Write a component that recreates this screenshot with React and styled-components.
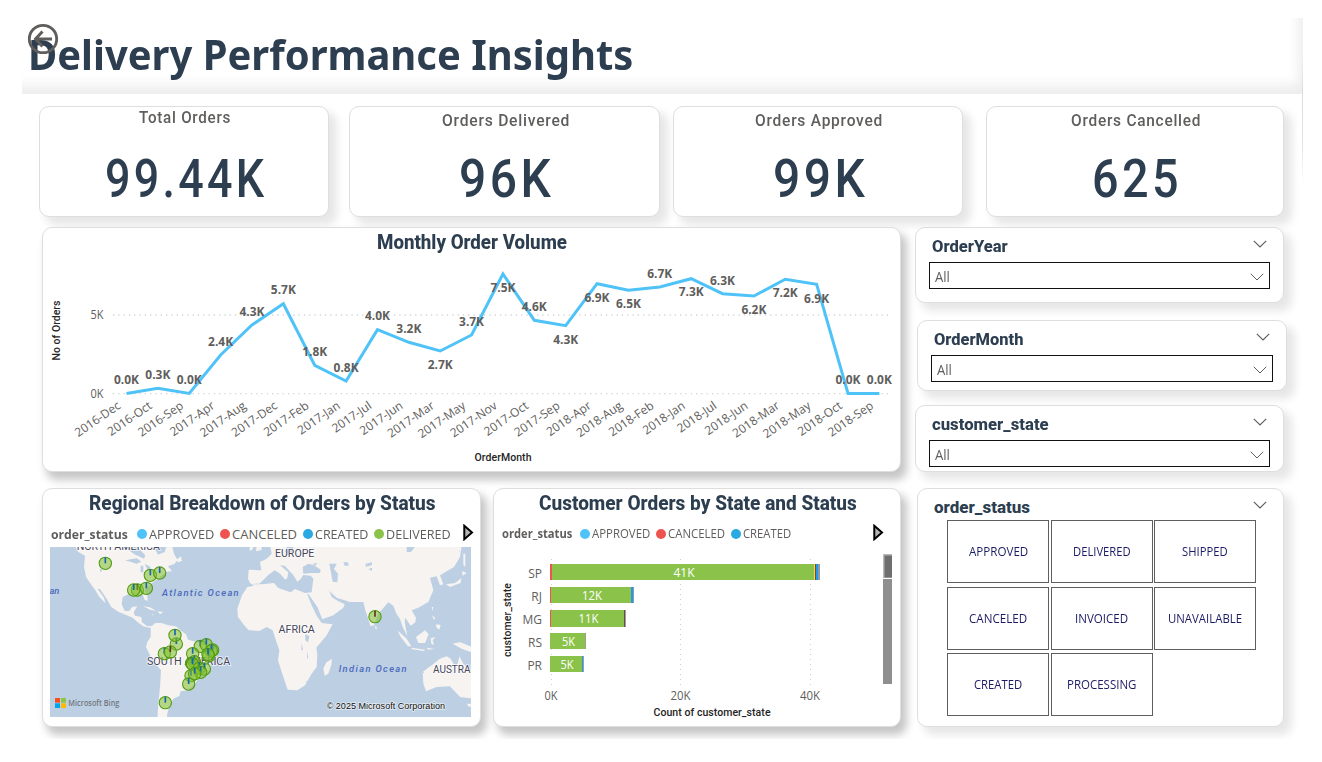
import React, { useLayoutEffect, useRef, useState } from "react";
import styled, { createGlobalStyle } from "styled-components";

const DIN = `Roboto, "Liberation Sans", sans-serif`;
const UI = `"Open Sans", "Noto Sans", sans-serif`;
const NAVY = "#2c3e50";
const GREY = "#605e5c";

const Global = createGlobalStyle`
  * { box-sizing: border-box; }
  body { margin: 0; background: #fff; font-family: ${UI}; color: ${GREY}; }
`;

const FitBox = styled.span`
  display: inline-block;
  flex: none;
  white-space: nowrap;
  text-align: left;
`;
const FitText = styled.span`
  display: inline-block;
  transform-origin: left center;
`;

/* Stretches or condenses its text horizontally to the given width. */
function Fit({ w, children }) {
  const ref = useRef(null);
  const [scale, setScale] = useState(1);
  useLayoutEffect(() => {
    setScale(w / ref.current.offsetWidth);
  }, [w, children]);
  return (
    <FitBox style={{ width: w }}>
      <FitText ref={ref} style={{ transform: `scaleX(${scale})` }}>{children}</FitText>
    </FitBox>
  );
}

const Canvas = styled.main`
  position: relative;
  width: 1281px;
  height: 721px;
  margin: 18px 0 0 22px;
  overflow: hidden;
  background: #fff;
`;
const Header = styled.header`
  display: flex;
  align-items: center;
  height: 76px;
  padding: 0 0 5px 6px;
  box-shadow: inset -8px -12px 12px -3px #eeeeee;
`;
const PageTitle = styled.h1`
  margin: 0;
  font: 700 42px/1 "Noto Sans", "Open Sans", sans-serif;
  color: ${NAVY};
`;
const BackButton = styled.svg`
  position: absolute;
  left: 5px;
  top: 5px;
`;
const EdgeLine = styled.i`
  position: absolute;
  right: 0;
  top: 36px;
  width: 1px;
  height: 130px;
  background: linear-gradient(rgba(0, 0, 0, 0), #dcdcdc 30%, #e4e4e4 70%, rgba(0, 0, 0, 0));
`;

const Card = styled.section`
  display: flex;
  flex-direction: column;
  flex: none;
  width: ${(p) => p.$w}px;
  height: ${(p) => p.$h}px;
  margin-left: ${(p) => p.$ml || 0}px;
  margin-top: ${(p) => p.$mt || 0}px;
  border: 1px solid #dedede;
  border-radius: 10px;
  background: #fff;
  box-shadow: ${(p) => (p.$dark ? "5px 7px 9px 1px #c6c6c6" : "7px 7px 9px 1px #e7e7e7")};
`;
const Kpis = styled.div`
  display: flex;
  margin: 12px 0 0 17px;
`;
const KpiCard = styled(Card)`
  align-items: center;
  padding-left: 2px;
  font-family: ${DIN};
`;
const KpiLabel = styled.div`
  margin-top: ${(p) => p.$top}px;
  height: 20px;
  font-size: 16.5px;
  font-weight: 500;
  line-height: 20px;
  letter-spacing: 0.8px;
`;
const KpiValue = styled.div`
  margin-top: ${(p) => p.$top}px;
  padding-left: 2px;
  font-size: 54.5px;
  font-weight: 500;
  line-height: 60px;
  letter-spacing: 4px;
  color: ${NAVY};
`;

const Body = styled.div`
  display: flex;
  margin: 10px 0 0 20px;
`;
const Charts = styled.div`
  width: 873px;
`;
const Row = styled.div`
  display: flex;
  margin-top: 16px;
`;
const Side = styled.aside`
  display: flex;
  flex-direction: column;
`;
const CardTitle = styled.h2`
  margin: 0;
  height: 30px;
  padding-left: 1px;
  text-align: center;
  font: 800 19.5px/29px ${DIN};
  color: ${NAVY};
`;

const SlicerHead = styled.div`
  display: flex;
  justify-content: space-between;
  align-items: flex-start;
  height: ${(p) => p.$h || 34}px;
  padding: 8px 16px 0 16px;
  font: 800 17px/20px ${DIN};
  color: ${NAVY};
`;
const HeadChevron = styled.svg`
  margin-top: 4px;
`;
const Select = styled.div`
  display: flex;
  align-items: center;
  justify-content: space-between;
  height: 27px;
  margin: 0 13px;
  padding: 2px 5px 0 5px;
  border: 1px solid #111;
  font-size: 14px;
  line-height: 20px;
  color: ${GREY};
`;
const StatusGrid = styled.div`
  display: grid;
  grid-template-columns: repeat(3, 102px);
  grid-auto-rows: 63px;
  gap: 3.5px 1.5px;
  margin-left: 29px;
`;
const StatusTile = styled.div`
  display: flex;
  align-items: center;
  justify-content: center;
  padding-top: 1px;
  border: 1px solid ${GREY};
  font-size: 12px;
  line-height: 16px;
  color: #1b1b64;
`;

const Legend = styled.div`
  display: flex;
  align-items: center;
  height: 26px;
  padding-top: 3px;
  padding-left: ${(p) => p.$pl}px;
  font-size: ${(p) => p.$fs}px;
  line-height: 20px;
`;
const LegendName = styled.b`
  display: flex;
  margin-right: ${(p) => p.$mr}px;
`;
const LegendItem = styled.span`
  display: flex;
  align-items: center;
  margin-right: 6px;
`;
const Dot = styled.i`
  width: 10px;
  height: 10px;
  margin-right: ${(p) => p.$gap}px;
  border-radius: 50%;
  background: ${(p) => p.$c};
`;
const NextArrow = styled.svg`
  margin-bottom: 2px;
  margin-left: ${(p) => p.$ml}px;
`;
const Plot = styled.svg`
  display: block;
  flex: none;
  font-family: ${UI};
`;
const MapView = styled(Plot)`
  margin: 2px 0 0 7px;
`;

function Chevron({ head }) {
  const path = <path d="M.8 .8 L7 7 L13.2 .8" fill="none" stroke={GREY} strokeWidth={head ? 1.2 : 1} />;
  return head ? (
    <HeadChevron width="14" height="8">{path}</HeadChevron>
  ) : (
    <svg width="14" height="8">{path}</svg>
  );
}

function Slicer({ title, tw, ...card }) {
  return (
    <Card {...card}>
      <SlicerHead>
        <Fit w={tw}>{title}</Fit>
        <Chevron head />
      </SlicerHead>
      <Select>
        <Fit w={15}>All</Fit>
        <Chevron />
      </Select>
    </Card>
  );
}

const KPIS = [
  { label: "Total Orders", lw: 92, value: "99.44K", vw: 162, w: 290, ml: 0, raised: true },
  { label: "Orders Delivered", lw: 128, value: "96K", vw: 95, w: 311, ml: 20 },
  { label: "Orders Approved", lw: 128, value: "99K", vw: 95, w: 290, ml: 13 },
  { label: "Orders Cancelled", lw: 130, value: "625", vw: 90, w: 298, ml: 23 },
];

/* month, line y, label text, label centre y */
const MONTHS = [
  ["2016-Dec", 393.5, "0.0K", 380], ["2016-Oct", 388.3, "0.3K", 375], ["2016-Sep", 393.5, "0.0K", 380],
  ["2017-Apr", 355, "2.4K", 342], ["2017-Aug", 325, "4.3K", 312], ["2017-Dec", 303.7, "5.7K", 290],
  ["2017-Feb", 365.3, "1.8K", 352], ["2017-Jan", 381, "0.8K", 368], ["2017-Jul", 329.7, "4.0K", 316],
  ["2017-Jun", 342.3, "3.2K", 329], ["2017-Mar", 351, "2.7K", 365], ["2017-May", 335, "3.7K", 322],
  ["2017-Nov", 274, "7.5K", 288], ["2017-Oct", 320.3, "4.6K", 307], ["2017-Sep", 325.7, "4.3K", 340],
  ["2018-Apr", 283.7, "6.9K", 298], ["2018-Aug", 290.3, "6.5K", 304], ["2018-Feb", 287, "6.7K", 274],
  ["2018-Jan", 278.7, "7.3K", 292], ["2018-Jul", 293.7, "6.3K", 281], ["2018-Jun", 296, "6.2K", 310],
  ["2018-Mar", 279.3, "7.2K", 293], ["2018-May", 284.3, "6.9K", 299], ["2018-Oct", 393.5, "0.0K", 380],
  ["2018-Sep", 393.5, "0.0K", 380],
];
const monthX = (i) => 126.5 + i * 31.37;

function LineChart() {
  return (
    <Plot width="857" height="213" viewBox="43 258 857 213">
      <g stroke="#d4d4d4" strokeWidth="1.3" strokeDasharray="1.3 4">
        <path d="M113 315 H891" />
        <path d="M113 393.7 H891" />
      </g>
      <g fontSize="12" fill={GREY} textAnchor="end">
        <text x="103.5" y="319" textLength="13" lengthAdjust="spacingAndGlyphs">5K</text>
        <text x="103.5" y="398" textLength="13" lengthAdjust="spacingAndGlyphs">0K</text>
      </g>
      <polyline
        points={MONTHS.map((m, i) => `${monthX(i)},${m[1]}`).join(" ")}
        fill="none" stroke="#4fc3f7" strokeWidth="3" strokeLinejoin="miter"
      />
      <g fontSize="11.5" fontWeight="700" fill={GREY} textAnchor="middle">
        {MONTHS.map((m, i) => (
          <text key={i} x={monthX(i)} y={m[3] + 4.4} textLength="25" lengthAdjust="spacingAndGlyphs">{m[2]}</text>
        ))}
      </g>
      <g fontSize="12" fill={GREY} textAnchor="end">
        {MONTHS.map((m, i) => (
          <text key={i} transform={`translate(${monthX(i) - 5} 407.5) rotate(-34.5)`}>{m[0]}</text>
        ))}
      </g>
      <g fontFamily={DIN} fontSize="10.5" fontWeight="500" fill="#252423" textAnchor="middle">
        <text transform="translate(60 330.5) rotate(-90)" textLength="60" lengthAdjust="spacing">No of Orders</text>
        <text x="503" y="461" textLength="57" lengthAdjust="spacing">OrderMonth</text>
      </g>
    </Plot>
  );
}

const BARS = [
  { s: "SP", y: 564, h: 16, v: "41K", tx: 684, w: 21, parts: [[550, 2, "#ef5350"], [552, 262, "#8bc34a"], [814, 1, "#fdd835"], [815, 1, "#6d4c41"], [816, 2, "#2196f3"], [818, 2, "#8f9aa3"]] },
  { s: "RJ", y: 587, h: 16, v: "12K", tx: 592, w: 20, parts: [[550, 1, "#ef5350"], [551, 80, "#8bc34a"], [631, 2, "#2196f3"], [633, 1, "#8f9aa3"]] },
  { s: "MG", y: 610, h: 17, v: "11K", tx: 588.5, w: 20, parts: [[550, 1, "#ef5350"], [551, 73, "#8bc34a"], [624, 1, "#6d4c41"], [625, 1, "#9e9e9e"]] },
  { s: "RS", y: 633, h: 16, v: "5K", tx: 568.5, w: 13, parts: [[550, 35, "#8bc34a"], [585, 1, "#9e9e9e"]] },
  { s: "PR", y: 656, h: 16, v: "5K", tx: 567, w: 13, parts: [[550, 32, "#8bc34a"], [582, 1, "#2196f3"], [583, 1, "#9e9e9e"]] },
];

function BarChart() {
  return (
    <Plot width="406" height="180" viewBox="494 545 406 180">
      <g stroke="#cfcfcf" strokeWidth="1" strokeDasharray="1 4">
        <path d="M551.5 559 V685" />
        <path d="M680.5 559 V685" />
        <path d="M810.5 559 V685" />
      </g>
      {BARS.map((b) => (
        <g key={b.s} fontSize="12">
          {b.parts.map(([x, w, c]) => (
            <rect key={x} x={x} y={b.y} width={w} height={b.h} fill={c} shapeRendering="crispEdges" />
          ))}
          <text x="542" y={b.y + 13.6} fill={GREY} textAnchor="end">{b.s}</text>
          <text x={b.tx} y={b.y + 12.5} fill="#fff" textAnchor="middle" textLength={b.w} lengthAdjust="spacingAndGlyphs">{b.v}</text>
        </g>
      ))}
      <g fontSize="12" fill={GREY} textAnchor="middle">
        <text x="551" y="700" textLength="13" lengthAdjust="spacingAndGlyphs">0K</text>
        <text x="680.5" y="700" textLength="20" lengthAdjust="spacingAndGlyphs">20K</text>
        <text x="810" y="700" textLength="20" lengthAdjust="spacingAndGlyphs">40K</text>
      </g>
      <g fontFamily={DIN} fontSize="10.5" fontWeight="500" fill="#252423" textAnchor="middle">
        <text transform="translate(510.5 620) rotate(-90)" textLength="74" lengthAdjust="spacing">customer_state</text>
        <text x="712" y="716" textLength="117" lengthAdjust="spacing">Count of customer_state</text>
      </g>
      <rect x="883" y="554" width="9" height="130" fill="#8f8f8f" />
      <rect x="883" y="554" width="9" height="24" fill="#b9b9b9" />
      <rect x="884.5" y="555.5" width="7.5" height="22" fill="#6e6e6e" />
      <rect x="883" y="578" width="9" height="1" fill="#fff" />
    </Plot>
  );
}

/* Marker centres in the map's drawing units; the third value flags a dark tick. */
const MARKERS = [
  [166, 49], [301, 85], [329, 78], [262, 129, 1], [251, 129], [289, 124], [379, 291], [375, 265], [343, 320],
  [361, 315, 1], [346, 467], [451, 298], [469, 293], [488, 309], [484, 311], [476, 327], [474, 322], [428, 320],
  [433, 344], [425, 349], [428, 352], [448, 364], [463, 366], [452, 376], [423, 386], [434, 380], [416, 411], [975, 209, 1],
];

function WorldMap() {
  return (
    <MapView width="421" height="170" viewBox="0 0 1263 510">
      <defs>
        <filter id="coast" x="0" y="0" width="100%" height="100%">
          <feTurbulence type="fractalNoise" baseFrequency="0.16" numOctaves="2" seed="4" />
          <feDisplacementMap in="SourceGraphic" scale="5" />
        </filter>
      </defs>
      <rect width="1263" height="510" fill="#bccfe3" />
      <g fill="#f6f3f1" filter="url(#coast)">
        <path d="M74 -5 L85 15 L105 26 L102 60 L108 90 L125 115 L133 125 L150 152 L166 168 L162 152 L143 126 L150 126 L170 155 L184 180 L205 194 L230 205 L248 212 L262 225 L280 238 L300 243 L306 236 L292 238 L276 226 L274 210 L255 206 L251 196 L262 178 L246 180 L238 192 L224 192 L215 172 L218 150 L235 142 L258 146 L278 143 L284 158 L293 162 L292 146 L283 130 L302 112 L318 100 L334 86 L350 74 L366 72 L354 58 L374 50 L382 38 L372 20 L366 -5 Z" />
        <path d="M376 40 L394 28 L396 42 L384 46 Z M280 178 L300 181 L318 191 L300 188 Z M322 193 L340 195 L330 202 Z M305 202 l8 2 l-7 1z" />
        <path d="M302 240 L316 228 L335 228 L355 235 L378 238 L394 252 L408 262 L414 278 L440 285 L470 295 L495 310 L498 318 L482 345 L478 370 L455 385 L440 402 L425 420 L412 430 L392 433 L388 447 L370 455 L362 470 L356 485 L352 500 L350 515 L322 515 L325 470 L330 420 L333 370 L316 350 L300 325 L288 300 L292 285 L302 270 Z" />
        <path d="M660 -5 L665 20 L650 35 L630 45 L634 70 L596 68 L594 95 L600 108 L612 116 L592 120 L576 145 L562 185 L564 210 L580 232 L596 250 L628 252 L650 240 L668 250 L676 275 L688 310 L684 340 L695 375 L713 428 L742 430 L765 415 L785 380 L800 360 L802 322 L799 302 L830 265 L848 232 L815 228 L800 206 L785 175 L771 140 L777 143 L802 180 L817 217 L850 205 L880 182 L884 172 L860 160 L845 150 L838 132 L860 152 L900 165 L940 165 L946 190 L962 238 L972 235 L985 200 L1015 166 L1030 176 L1038 198 L1050 216 L1058 240 L1072 268 L1064 225 L1066 212 L1082 236 L1096 226 L1098 212 L1085 190 L1105 182 L1135 165 L1150 130 L1140 92 L1160 88 L1170 115 L1180 112 L1170 85 L1212 60 L1230 30 L1235 -5 Z" />
        <path d="M845 335 L845 350 L835 380 L824 386 L820 365 L828 347 Z M620 -5 h16 l-2 14 l-16 4z M600 0 h10 l-4 10 h-8z" />
        <path d="M1118 375 L1145 355 L1170 335 L1190 328 L1202 335 L1210 350 L1222 354 L1228 328 L1240 350 L1270 378 V455 L1230 450 L1200 418 L1160 420 L1128 433 L1120 410 Z M1208 290 L1230 285 L1270 302 V318 L1235 305 Z" />
        <path d="M1042 250 L1070 275 L1084 298 L1074 298 L1052 270 Z M1084 302 L1125 308 L1122 312 L1086 307 Z M1098 270 L1125 250 L1136 262 L1125 288 L1105 288 Z M1142 274 l14 -4 l-8 10 l4 14 l-8 -4z M1188 112 L1215 108 L1234 93 L1232 108 L1200 120 Z M1236 72 l14 6 l-12 8z M1240 20 l6 0 l0 40 l-6 -6z M974 236 l7 4 l-3 9z M1145 180 l5 0 l-3 12z M1146 205 l10 8 l-4 6z M1158 232 l14 2 l-4 14 l-8 -6z M1250 470 l15 0 v8 l-8 2z M1130 302 l24 4 l-20 2z" />
      </g>
      <g fill="#bccfe3" filter="url(#coast)">
        <path d="M600 112 L630 109 L655 84 L674 70 L690 80 L706 98 L712 92 L715 76 L690 55 L704 56 L730 84 L742 104 L752 96 L760 84 L782 86 L790 95 L785 136 L765 138 L735 126 L722 136 L700 128 L684 122 L672 108 L635 112 Z" />
        <path d="M758 60 L775 50 L792 55 L812 68 L810 78 L785 78 L760 80 Z M788 50 l14 -2 l-6 8z" />
        <path d="M838 50 L860 50 L852 66 L864 80 L862 106 L848 104 L842 72 Z M712 -5 l20 0 l-6 20 l-12 6 l-10 -6z" />
        <path d="M225 40 l35 -6 l14 10 l-14 6z M272 56 l8 0 l0 20 l-8 0z M284 50 l18 10 l-8 12z M302 76 l18 -6 l-4 8z M216 -5 l40 0 l30 30 l-4 10 l-30 -14z M310 -5 l40 0 l-6 20 l-20 8z" />
        <path d="M766 262 l12 6 l-4 18 l-8 -6z M755 288 l4 22 l-5 -2z M772 312 l3 22 l-4 0z M946 50 l20 -4 l0 8 l-18 6z M1070 -2 l26 0 l-12 16 l-14 2z M880 46 l14 0 l2 10 l-12 0z M955 66 l12 -4 l-2 10z M150 66 l5 0 v8 h-5z" />
      </g>
      <g fontFamily={DIN} fontSize="30" fill="#45455a" stroke="#fff" strokeWidth="5" strokeOpacity=".75" paintOrder="stroke" textAnchor="middle">
        <text x="205" y="10" textLength="250" lengthAdjust="spacingAndGlyphs">NORTH AMERICA</text>
        <text x="416" y="353" textLength="250" lengthAdjust="spacingAndGlyphs">SOUTH AMERICA</text>
        <text x="734" y="29" textLength="118" lengthAdjust="spacingAndGlyphs">EUROPE</text>
        <text x="740" y="258" textLength="109" lengthAdjust="spacingAndGlyphs">AFRICA</text>
        <text x="1149" y="377" textAnchor="start">AUSTRALIA</text>
      </g>
      <g fontFamily={DIN} fontSize="28" fontStyle="italic" fontWeight="500" fill="#4b69bd">
        <text x="336" y="146" textLength="230">Atlantic Ocean</text>
        <text x="866" y="374" textLength="204">Indian Ocean</text>
        <text x="28" y="141" textAnchor="end">Ocean</text>
      </g>
      {MARKERS.map(([x, y, dark], i) => (
        <g key={i}>
          <circle cx={x} cy={y} r="18.5" fill="#7fc02c" fillOpacity=".55" stroke="#539a10" strokeWidth="3.2" />
          <path d={`M${x} ${y} V${y - 18}`} stroke={dark ? "#5b3a1e" : "#1467ad"} strokeWidth="5" />
        </g>
      ))}
      <rect x="15" y="453" width="15" height="14" fill="#f25022" />
      <rect x="33" y="453" width="15" height="14" fill="#8cc63f" />
      <rect x="15" y="469" width="15" height="14" fill="#00a4ef" />
      <rect x="33" y="469" width="15" height="14" fill="#ffb900" />
      <text x="55" y="478" fontSize="25" fontWeight="600" fill="#737780" textLength="153" lengthAdjust="spacingAndGlyphs">Microsoft Bing</text>
      <text x="830" y="486" fontFamily={`"Liberation Sans", sans-serif`} fontSize="27" fill="#111" stroke="#fff" strokeWidth="5" strokeOpacity=".6" paintOrder="stroke" textLength="355" lengthAdjust="spacingAndGlyphs">© 2025 Microsoft Corporation</text>
    </MapView>
  );
}

function StatusLegend({ pl, fs, nameWidth, nameGap, gap, items, arrowGap }) {
  return (
    <Legend $pl={pl} $fs={fs}>
      <LegendName $mr={nameGap}><Fit w={nameWidth}>order_status</Fit></LegendName>
      {items.map(([label, color, w]) => (
        <LegendItem key={label}>
          <Dot $c={color} $gap={gap} />
          <Fit w={w}>{label}</Fit>
        </LegendItem>
      ))}
      <NextArrow width="11" height="17" $ml={arrowGap}>
        <path d="M1.3 1.8 L9 8.5 L1.3 15.2 Z" fill="#b5b5b5" stroke="#000" strokeWidth="2" />
      </NextArrow>
    </Legend>
  );
}

const TILES = [
  ["APPROVED", 59], ["DELIVERED", 58], ["SHIPPED", 46], ["CANCELED", 58],
  ["INVOICED", 53], ["UNAVAILABLE", 74], ["CREATED", 48], ["PROCESSING", 69],
];

export default function App() {
  return (
    <>
      <Global />
      <Canvas>
        <Header>
          <PageTitle><Fit w={605}>Delivery Performance Insights</Fit></PageTitle>
        </Header>
        <Kpis>
          {KPIS.map((k) => (
            <KpiCard key={k.label} $w={k.w} $h={111} $ml={k.ml}>
              <KpiLabel $top={k.raised ? 1 : 4}><Fit w={k.lw}>{k.label}</Fit></KpiLabel>
              <KpiValue $top={k.raised ? 20 : 17}><Fit w={k.vw}>{k.value}</Fit></KpiValue>
            </KpiCard>
          ))}
        </Kpis>
        <Body>
          <Charts>
            <Card $w={859} $h={245} $dark>
              <CardTitle><Fit w={190}>Monthly Order Volume</Fit></CardTitle>
              <LineChart />
            </Card>
            <Row>
              <Card $w={439} $h={239} $dark>
                <CardTitle><Fit w={347}>Regional Breakdown of Orders by Status</Fit></CardTitle>
                <StatusLegend
                  pl={8} fs={13} nameWidth={77} nameGap={9} gap={2} arrowGap={5.5}
                  items={[["APPROVED", "#4fc3f7", 65], ["CANCELED", "#ef5350", 65], ["CREATED", "#29a9e1", 53], ["DELIVERED", "#8bc34a", 65]]}
                />
                <WorldMap />
              </Card>
              <Card $w={408} $h={239} $ml={12} $dark>
                <CardTitle><Fit w={318}>Customer Orders by State and Status</Fit></CardTitle>
                <StatusLegend
                  pl={8} fs={12} nameWidth={70} nameGap={8} gap={2} arrowGap={76}
                  items={[["APPROVED", "#4fc3f7", 58], ["CANCELED", "#ef5350", 57], ["CREATED", "#29a9e1", 48]]}
                />
                <BarChart />
              </Card>
            </Row>
          </Charts>
          <Side>
            <Slicer title="OrderYear" tw={76} $w={369} $h={76} />
            <Slicer title="OrderMonth" tw={89} $w={370} $h={71} $mt={17} $ml={2} />
            <Slicer title="customer_state" tw={117} $w={369} $h={67} $mt={14} />
            <Card $w={367} $h={239} $mt={16} $ml={2}>
              <SlicerHead $h={31}>
                <Fit w={96}>order_status</Fit>
                <Chevron head />
              </SlicerHead>
              <StatusGrid>
                {TILES.map(([t, w]) => <StatusTile key={t}><Fit w={w}>{t}</Fit></StatusTile>)}
              </StatusGrid>
            </Card>
          </Side>
        </Body>
        <EdgeLine />
        <BackButton width="32" height="32" viewBox="0 0 32 32">
          <circle cx="16" cy="16" r="13.7" fill="none" stroke={GREY} strokeWidth="2.8" />
          <path d="M25 16 H9 M15.5 8.5 L8.5 16 L15.5 23.5" fill="none" stroke={GREY} strokeWidth="3" />
        </BackButton>
      </Canvas>
    </>
  );
}
